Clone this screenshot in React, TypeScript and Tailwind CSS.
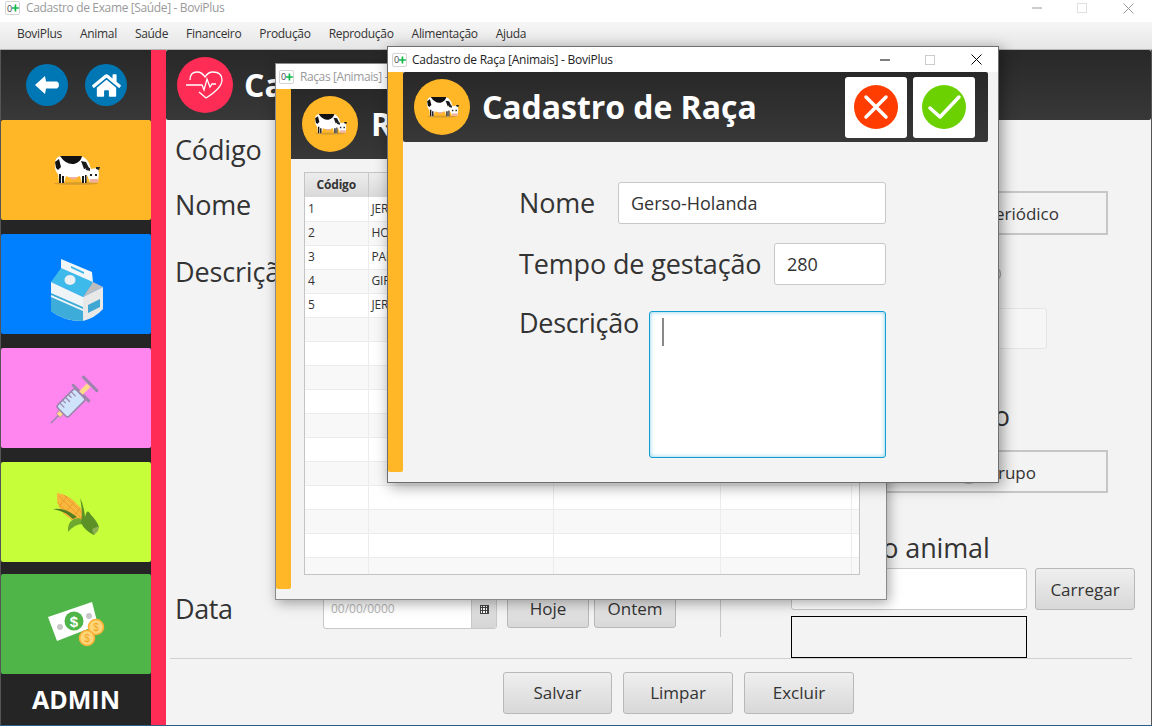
import type { ReactNode } from 'react';
import { FaHome } from 'react-icons/fa';

const menuItems = ['BoviPlus', 'Animal', 'Saúde', 'Financeiro', 'Produção', 'Reprodução', 'Alimentação', 'Ajuda'];
const breeds = ['JERSEY', 'HOLANDA', 'PARDO SUÍÇO', 'GIR', 'JERSEY'];

function AppIcon() {
  return (
    <span className="flex h-[14px] w-[15px] shrink-0 items-center rounded-[2px] border border-[#d5d5d5] bg-white pl-[1px] text-[9px] leading-none tracking-normal text-[#444]">
      0
      <svg viewBox="0 0 8 8" className="h-2 w-2">
        <path d="M4 0v8M0 4h8" stroke="#12b84a" strokeWidth="2" />
      </svg>
    </span>
  );
}

function Cow({ className }: { className: string }) {
  return (
    <svg viewBox="0 0 48 30" className={className}>
      <ellipse cx="24" cy="28.5" rx="22" ry="1.3" fill="#b98a2e" opacity="0.6" />
      <path d="M3 8 Q3 2 9 1 H28 Q34 2 37 8 L39 14 L35 20 L34 28 H30 L28 21 Q20 24 14 21 L12 28 H7 L6 19 Q2 15 3 8Z" fill="#fff" />
      <path d="M8 1 H30 Q29 7 22 9 Q14 10 8 1Z" fill="#111" />
      <path d="M3 7 L7 4 L9 12 L6 15 L4 13Z" fill="#111" />
      <path d="M7 19h2v9H7zM10 21h2v7h-2zM30 21h2v7h-2zM33 20h1.5v8H33zM29 6l5 1 3 6-5 1z" fill="#1a1a1a" />
      <path d="M17 22 Q21 27 26 22Z" fill="#efb3a3" />
      <path d="M33 13 L38 14 L46 13 L47 19 L46 27 L38 27 L35 20Z" fill="#fff" />
      <path d="M38 24 h8 v3.5 h-8z" fill="#eeb0a0" />
      <path d="M38 19h2v2h-2zM43 19h2v2h-2zM33 12l5 1 0 3-4-1zM44 12l4 0-1 3-3-1z" fill="#222" />
    </svg>
  );
}

function MilkIcon() {
  return (
    <svg viewBox="0 0 52 63" className="ml-[2px] mt-[12px] h-[63px] w-[52px]">
      <path d="M10 0 L41 13 L42 24 L10 11Z" fill="#f2f6f8" />
      <path d="M20 7 L33 13 L33 15 L20 9Z" fill="#3db6e6" />
      <path d="M10 9 L42 23 L32 38 L0 23Z" fill="#3db9ea" />
      <ellipse cx="19" cy="21" rx="5.5" ry="5" fill="#e9eff2" />
      <path d="M42 23 L52 28 L32 38Z" fill="#bdbdbd" />
      <path d="M32 38 L52 28 L52 50 Q44 59 32 62Z" fill="#e8e8e8" />
      <path d="M37 46 L49 40 L49 48 L37 54Z" fill="#3fa7d2" />
      <path d="M0 23 L32 38 L32 62 Q12 62 0 52Z" fill="#eff5f7" />
      <path d="M0 38 L32 52 L32 62 Q12 62 0 52Z" fill="#3dacd8" />
      <path d="M0 34 L32 48 L32 50 L0 36Z" fill="#3dacd8" />
    </svg>
  );
}

function SyringeIcon() {
  return (
    <svg viewBox="0 0 52 52" className="h-[52px] w-[52px] overflow-visible">
      <g transform="rotate(45 26 26)" stroke="#9b85ad" strokeLinecap="round" strokeLinejoin="round">
        <path d="M26 61 V51" strokeWidth="1.4" fill="none" />
        <path d="M23.5 46 h5 v5 h-5z" fill="#ffd98a" strokeWidth="0.8" />
        <rect x="18" y="20" width="16" height="26" rx="2.5" fill="#cfe3fa" strokeWidth="1.6" />
        <path d="M15 19 h22" strokeWidth="3" />
        <path d="M23.5 8 h5 v11 h-5z" fill="#ffd98a" strokeWidth="0" />
        <path d="M16.5 6 h19" strokeWidth="3" />
        <path d="M18 25h6M18 29h4M18 33h6M18 37h4M18 41h6" strokeWidth="1.2" />
      </g>
    </svg>
  );
}

function CornIcon() {
  return (
    <svg viewBox="0 0 46 43" className="mt-[4px] h-[43px] w-[46px]">
      <path d="M4 0 Q16 1 27 14 Q33 22 32 29 Q20 30 10 20 Q3 11 4 0Z" fill="#f8b63c" />
      <path d="M6 3 L30 27 M11 2 L31 22 M4 9 L24 29 M14 3 L6 14 M21 9 L11 21 M27 15 L18 27 M31 22 L25 30" stroke="#e39526" strokeWidth="0.7" />
      <path d="M0 16 Q12 14 24 24 L20 26 Q12 18 0 16Z" fill="#4f7f22" />
      <path d="M15 39 Q14 26 26 25 L36 32 Q24 28 15 39Z" fill="#6ea82e" />
      <path d="M27 5 Q31 12 32 24 Q34 14 38 22 Q44 28 46 34 L41 42 Q32 38 28 30 Q30 18 27 5Z" fill="#5c9127" />
      <path d="M39 36 L46 33 L45 38 L41 42Z" fill="#8eb052" />
    </svg>
  );
}

function MoneyIcon() {
  return (
    <svg viewBox="0 0 57 46" className="h-[46px] w-[57px]">
      <path d="M0 16 L44 1 L50 24 L9 40Z" fill="#fff" />
      <circle cx="12" cy="26" r="3" fill="#c7c7c7" />
      <circle cx="41" cy="15" r="3" fill="#c7c7c7" />
      <circle cx="26" cy="20" r="9.5" fill="#4fb548" />
      <text x="26" y="25.5" textAnchor="middle" fill="#fff" fontSize="15" fontWeight="700" fontFamily="Liberation Sans, sans-serif">$</text>
      <circle cx="48" cy="26" r="7.5" fill="#ffd57a" stroke="#fbb034" strokeWidth="1.6" />
      <text x="48" y="30" textAnchor="middle" fill="#f2a51e" fontSize="10" fontFamily="Liberation Sans, sans-serif">$</text>
      <circle cx="39" cy="37" r="7.5" fill="#ffd57a" stroke="#fbb034" strokeWidth="1.6" />
      <text x="39" y="41" textAnchor="middle" fill="#f2a51e" fontSize="10" fontFamily="Liberation Sans, sans-serif">$</text>
    </svg>
  );
}

function HeartIcon() {
  return (
    <svg viewBox="0 0 38 28" className="h-[28px] w-[38px]" fill="none" stroke="#fff" strokeWidth="1.3">
      <path d="M4 9 Q4 1 11 1 Q16 1 19 6 Q22 1 27 1 Q36 1 36 9 Q36 17 20 27 L13 21" />
      <path d="M0 14 H16 L18 19 L21 8 L24 16 L26 13 H30" />
    </svg>
  );
}

function BackIcon() {
  return (
    <svg viewBox="0 0 24 18" className="h-[18px] w-[24px]">
      <path d="M0 9 L10 0 L11 5.5 H22 Q24 6 24 9 Q24 12 22 12.5 H11 L10 18Z" fill="#fff" strokeLinejoin="round" />
    </svg>
  );
}

function ActionButton({ children }: { children: ReactNode }) {
  return <div className="flex h-[61px] w-[62px] items-center justify-center rounded-[3px] bg-white">{children}</div>;
}

function PushButton({ label, className }: { label: string; className: string }) {
  return (
    <button type="button" className={`rounded-[3px] border border-[#b8b8b8] bg-gradient-to-b from-[#efefef] to-[#d8d8d8] text-[17px] text-[#333] ${className}`}>
      {label}
    </button>
  );
}

function Tile({ color, children, className }: { color: string; children: ReactNode; className: string }) {
  return <div className={`flex h-[100px] items-center justify-center rounded-[2px] ${color} ${className}`}>{children}</div>;
}

function Sidebar() {
  return (
    <aside className="flex w-[150px] shrink-0 flex-col bg-[#252525]">
      <div className="flex h-[70px] items-center gap-[17px] bg-gradient-to-b from-[#282828] to-[#383838] pl-[25px]">
        <span className="flex h-[42px] w-[42px] items-center justify-center rounded-full bg-[#0077b5]">
          <BackIcon />
        </span>
        <span className="flex h-[42px] w-[42px] items-center justify-center rounded-full bg-[#0077b5]">
          <FaHome className="text-[29px] text-white" />
        </span>
      </div>
      <Tile color="bg-[#ffb627]" className="">
        <Cow className="h-[30px] w-[48px]" />
      </Tile>
      <Tile color="bg-[#007fff]" className="mt-[14px]">
        <MilkIcon />
      </Tile>
      <Tile color="bg-[#ff86ee]" className="mt-[14px]">
        <SyringeIcon />
      </Tile>
      <Tile color="bg-[#c6ff3a]" className="mt-[14px]">
        <CornIcon />
      </Tile>
      <Tile color="bg-[#4fb548]" className="mt-[12px]">
        <MoneyIcon />
      </Tile>
      <div className="flex h-[51px] items-center justify-center text-[25px] font-bold text-white">ADMIN</div>
    </aside>
  );
}

function MainForm() {
  return (
    <main className="flex min-w-0 flex-1 flex-col bg-[#f3f3f3]">
      <header className="flex h-[70px] shrink-0 items-center rounded-[2px] bg-gradient-to-b from-[#282828] to-[#383838] pl-[11px]">
        <span className="flex h-[56px] w-[56px] items-center justify-center rounded-full bg-[#ff2d55]">
          <HeartIcon />
        </span>
        <h1 className="ml-[11px] text-[32px] font-bold text-white">Cadastro de Exame</h1>
      </header>
      <div className="flex h-[538px] shrink-0">
        <div className="flex w-[554px] shrink-0 flex-col pl-[9px] pt-[10px] text-[27px] tracking-[-0.15px] text-[#333]">
          <p className="h-[40px] leading-[40px]">Código</p>
          <p className="mt-[15px] h-[40px] leading-[40px]">Nome</p>
          <p className="mt-[27px] h-[40px] leading-[40px]">Descrição</p>
          <div className="mt-[297px] flex items-center tracking-normal">
            <p className="mr-[92px] w-[56px] leading-[40px] tracking-[-0.4px]">Data</p>
            <div className="flex h-[39px] w-[174px] overflow-hidden rounded-[3px] border border-[#c8c8c8] bg-white">
              <span className="flex-1 pl-[7px] text-[12px] leading-[36px] text-[#b5b5b5]">00/00/0000</span>
              <span className="flex w-[25px] items-center justify-center border-l border-[#c8c8c8] bg-gradient-to-b from-[#e8e8e8] to-[#d6d6d6]">
                <span className="grid h-[9px] w-[9px] grid-cols-3 gap-[1px] bg-[#444] p-[1px]">
                  {Array.from({ length: 9 }, (_, i) => (
                    <span key={i} className="bg-white" />
                  ))}
                </span>
              </span>
            </div>
            <PushButton label="Hoje" className="ml-[10px] h-[38px] w-[82px]" />
            <PushButton label="Ontem" className="ml-[5px] h-[38px] w-[82px]" />
          </div>
        </div>
        <div className="mb-[21px] mt-[10px] w-px bg-[#c8c8c8]" />
        <div className="flex flex-col pl-[70px] pt-[71px]">
          <div className="flex h-[44px] w-[317px] items-center justify-end border-2 border-[#c6c6c6] pr-[47px] pt-[2px] text-[17px] text-[#333]">Periódico</div>
          <div className="mt-[30px] flex h-[18px] w-[210px] justify-end">
            <span className="block h-[18px] w-[18px] rounded-full border border-[#999] bg-[#e4e4e4]" />
          </div>
          <div className="mt-[25px] h-[42px] w-[256px] rounded-[3px] border border-[#e4e4e4] bg-[#f6f6f6]" />
          <p className="mt-[47px] h-[40px] w-[219px] text-right text-[27px] leading-[40px] text-[#333]">Tipo de grupo</p>
          <div className="mt-[14px] flex h-[43px] w-[317px] items-center justify-end gap-[6px] border-2 border-[#c6c6c6] pr-[70px] pt-[2px] text-[17px] text-[#333]">
            <span className="block h-[23px] w-[23px] shrink-0 rounded-full border border-[#aaa] bg-gradient-to-b from-[#eee] to-[#ddd]" />
            Grupo
          </div>
          <p className="-ml-[8px] mt-[35px] h-[40px] whitespace-nowrap text-[27px] leading-[40px] tracking-[-0.15px] text-[#333]">Nome do animal</p>
          <div className="flex gap-[8px]">
            <div className="h-[42px] w-[236px] rounded-[3px] border border-[#c8c8c8] bg-white" />
            <PushButton label="Carregar" className="h-[42px] w-[100px]" />
          </div>
          <div className="mt-[6px] h-[42px] w-[236px] border border-black" />
        </div>
      </div>
      <footer className="ml-[4px] mr-[19px] flex flex-1 gap-[11px] border-t border-[#d0d0d0] pl-[333px] pt-[13px]">
        <PushButton label="Salvar" className="h-[42px] w-[109px]" />
        <PushButton label="Limpar" className="h-[42px] w-[110px]" />
        <PushButton label="Excluir" className="h-[42px] w-[110px]" />
      </footer>
    </main>
  );
}

function BreedsWindow() {
  return (
    <section className="absolute left-[275px] top-[63px] flex h-[537px] w-[612px] flex-col border border-[#8a8a8a] bg-[#f3f3f3] shadow-[2px_3px_12px_rgba(0,0,0,0.35)]">
      <div className="flex h-[25px] shrink-0 items-center gap-[6px] bg-white pl-[3px] text-[12px] tracking-[-0.4px] text-[#9a9a9a]">
        <AppIcon />
        Raças [Animais] - BoviPlus
      </div>
      <div className="flex h-[500px] shrink-0">
        <div className="w-[15px] rounded-b-[2px] bg-[#ffb627]" />
        <div className="flex min-w-0 flex-1 flex-col">
          <div className="flex h-[70px] shrink-0 items-center bg-gradient-to-b from-[#282828] to-[#383838] pl-[11px]">
            <span className="flex h-[56px] w-[56px] shrink-0 items-center justify-center rounded-full bg-[#ffb627]">
              <Cow className="h-[22px] w-[34px]" />
            </span>
            <h2 className="ml-[13px] text-[32px] font-bold text-white">Raças</h2>
          </div>
          <div className="ml-[13px] mt-[13px] h-[403px] w-[556px] overflow-hidden border border-[#c4c4c4]">
            <table className="w-[554px] table-fixed border-collapse text-[12px] tracking-[-0.2px] text-[#333]">
              <thead>
                <tr className="h-[24px] bg-gradient-to-b from-[#ededed] to-[#d9d9d9] font-bold">
                  <th className="w-[63px] border-r border-[#c8c8c8] text-center">Código</th>
                  <th className="w-[185px] border-r border-[#c8c8c8]">Nome</th>
                  <th className="w-[167px] border-r border-[#c8c8c8]">Tempo</th>
                  <th className="w-[131px] border-r border-[#c8c8c8]">Descrição</th>
                  <th />
                </tr>
              </thead>
              <tbody>
                {Array.from({ length: 16 }, (_, i) => (
                  <tr key={i} className={`h-[24px] border-b border-[#ececec] ${i % 2 === 0 ? 'bg-white' : 'bg-[#f8f8f8]'}`}>
                    <td className="border-r border-[#ececec] pl-[3px]">{i < 5 ? i + 1 : ''}</td>
                    <td className="border-r border-[#ececec] pl-[3px]">{breeds[i] ?? ''}</td>
                    <td className="border-r border-[#ececec]" />
                    <td className="border-r border-[#ececec]" />
                    <td />
                  </tr>
                ))}
              </tbody>
            </table>
          </div>
        </div>
      </div>
    </section>
  );
}

function BreedFormWindow() {
  return (
    <section className="absolute left-[387px] top-[46px] flex h-[437px] w-[612px] flex-col border border-[#6e6e6e] bg-[#f3f3f3] shadow-[3px_3px_14px_rgba(0,0,0,0.4)]">
      <div className="flex h-[25px] shrink-0 items-center gap-[5px] bg-white pl-[4px] text-[12px] tracking-[-0.25px] text-[#222]">
        <AppIcon />
        <span className="flex-1">Cadastro de Raça [Animais] - BoviPlus</span>
        <svg viewBox="0 0 10 10" className="mr-[30px] h-[10px] w-[10px]">
          <path d="M0 5h10" stroke="#000" strokeWidth="1" />
        </svg>
        <svg viewBox="0 0 10 10" className="mr-[31px] h-[10px] w-[10px]">
          <rect x="0.5" y="0.5" width="9" height="9" fill="none" stroke="#ccc" />
        </svg>
        <svg viewBox="0 0 11 11" className="mr-[16px] h-[11px] w-[11px]">
          <path d="M0.5 0.5l10 10M10.5 0.5l-10 10" stroke="#000" strokeWidth="1" />
        </svg>
      </div>
      <div className="flex h-[400px] shrink-0">
        <div className="w-[15px] rounded-b-[2px] bg-[#ffb627]" />
        <div className="flex min-w-0 flex-1 flex-col">
          <div className="mr-[10px] flex h-[70px] shrink-0 items-center rounded-[2px] bg-gradient-to-b from-[#282828] to-[#383838] pl-[11px] pr-[13px]">
            <span className="flex h-[56px] w-[56px] items-center justify-center rounded-full bg-[#ffb627]">
              <Cow className="h-[22px] w-[34px]" />
            </span>
            <h2 className="ml-[12px] flex-1 text-[32px] font-bold tracking-[-0.05px] text-white">Cadastro de Raça</h2>
            <div className="flex gap-[6px]">
              <ActionButton>
                <svg viewBox="0 0 44 44" className="h-[44px] w-[44px]">
                  <circle cx="22" cy="22" r="22" fill="#ff3d00" />
                  <path d="M12 12 L32 32 M32 12 L12 32" stroke="#fff" strokeWidth="3.5" strokeLinecap="round" />
                </svg>
              </ActionButton>
              <ActionButton>
                <svg viewBox="0 0 44 44" className="h-[44px] w-[44px]">
                  <circle cx="22" cy="22" r="22" fill="#6cd100" />
                  <path d="M8 23 L18 32 L37 12" fill="none" stroke="#fff" strokeWidth="3.5" strokeLinecap="round" strokeLinejoin="round" />
                </svg>
              </ActionButton>
            </div>
          </div>
          <div className="flex flex-col pl-[116px] pt-[40px] text-[27px] tracking-[-0.15px] text-[#333]">
            <div className="flex items-center">
              <span className="w-[99px]">Nome</span>
              <div className="flex h-[42px] w-[268px] items-center rounded-[3px] border border-[#c8c8c8] bg-white pl-[12px] text-[18px] tracking-normal">Gerso-Holanda</div>
            </div>
            <div className="mt-[19px] flex items-center">
              <span className="w-[255px]">Tempo de gestação</span>
              <div className="flex h-[42px] w-[112px] items-center rounded-[3px] border border-[#c8c8c8] bg-white pl-[12px] text-[18px] tracking-normal">280</div>
            </div>
            <div className="mt-[26px] flex items-start">
              <span className="-mt-[8px] w-[130px] tracking-[-0.3px]">Descrição</span>
              <div className="h-[147px] w-[237px] rounded-[3px] border border-[#109ed2] bg-white pl-[12px] pt-[6px] shadow-[inset_0_0_4px_rgba(16,158,210,0.55)]">
                <span className="block h-[28px] w-[2px] bg-[#888]" />
              </div>
            </div>
          </div>
        </div>
      </div>
    </section>
  );
}

export default function App() {
  return (
    <div className="relative flex h-[726px] w-[1152px] flex-col overflow-hidden border-b border-[#2c5f86] bg-[#f3f3f3] font-['Open_Sans',sans-serif]">
      <div className="flex h-[22px] shrink-0 items-center gap-[6px] bg-white pb-[6px] pl-[5px] text-[12px] tracking-[-0.36px] text-[#9a9a9a]">
        <AppIcon />
        <span className="flex-1">Cadastro de Exame [Saúde] - BoviPlus</span>
        <svg viewBox="0 0 10 10" className="mr-[29px] h-[10px] w-[10px]">
          <path d="M0 5h10" stroke="#9a9a9a" />
        </svg>
        <svg viewBox="0 0 10 10" className="mr-[30px] h-[10px] w-[10px]">
          <rect x="0.5" y="0.5" width="9" height="9" fill="none" stroke="#e0e0e0" />
        </svg>
        <svg viewBox="0 0 11 11" className="mr-[18px] h-[11px] w-[11px]">
          <path d="M0.5 0.5l10 10M10.5 0.5l-10 10" stroke="#9a9a9a" />
        </svg>
      </div>
      <nav className="flex h-[28px] shrink-0 items-center gap-[18px] border-b border-[#b5b5b5] bg-gradient-to-b from-[#f6f6f6] to-[#e6e6e6] pb-[3px] pl-[17px] text-[12px] tracking-[-0.3px] text-[#333]">
        {menuItems.map((item) => (
          <span key={item}>{item}</span>
        ))}
      </nav>
      <div className="flex min-h-0 flex-1 bg-[#555] pl-px pr-px">
        <Sidebar />
        <div className="w-[15px] shrink-0 bg-[#ff2d55]" />
        <MainForm />
      </div>
      <BreedsWindow />
      <BreedFormWindow />
    </div>
  );
}
